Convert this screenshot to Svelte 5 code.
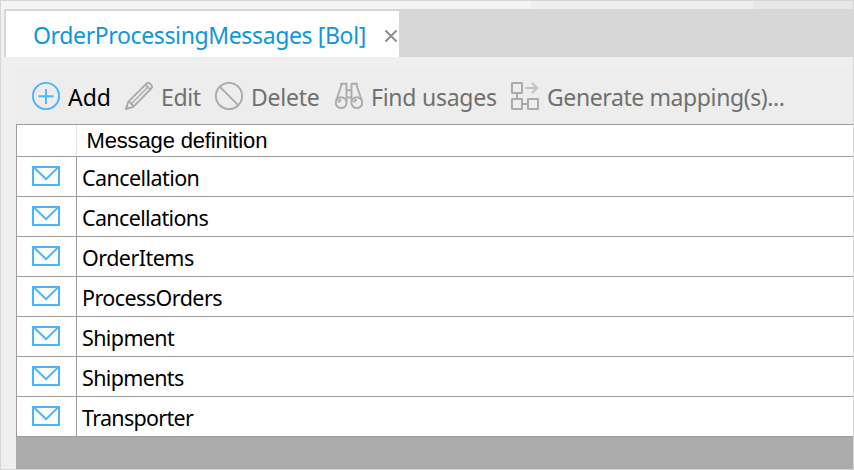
<script>
  const messages = [
    { name: 'Cancellation', spacing: -0.57 },
    { name: 'Cancellations', spacing: -0.64 },
    { name: 'OrderItems', spacing: -0.54 },
    { name: 'ProcessOrders', spacing: -0.56 },
    { name: 'Shipment', spacing: -0.62 },
    { name: 'Shipments', spacing: -0.65 },
    { name: 'Transporter', spacing: -0.7 }
  ];
</script>

<div class="window">
  <div class="strip"><i class="light"></i><i class="mid"></i><i class="dark"></i></div>
  <div class="tabs">
    <div class="edge"></div>
    <div class="tab">
      <span class="title">OrderProcessingMessages [Bol]</span>
      <svg class="close" width="14" height="14" viewBox="0 0 14 14"><path d="M1.5 1.5 12.5 12.5M12.5 1.5 1.5 12.5" /></svg>
    </div>
  </div>
  <div class="body">
    <div class="toolbar">
      <div class="action add">
        <svg width="28" height="28" viewBox="0 0 28 28"><circle cx="14" cy="14" r="13.1" /><path d="M14 7v15M6.5 14.3h15" /></svg>
        <span>Add</span>
      </div>
      <div class="action edit">
        <svg width="28" height="28" viewBox="0 0 28 28"><path d="M1 27 3.2 19.8 21.5 1.6Q23.5 0 25.7 2.2 28 4.4 26.3 6.5L8.2 24.8ZM3.2 19.8Q6.5 20.5 8.2 24.8M20.5 2.8 25.2 7.5M1 27 3.3 26.3 1.7 24.7Z" /><path class="thin" d="M22.2 5.8 5.8 22.2" /></svg>
        <span>Edit</span>
      </div>
      <div class="action delete">
        <svg width="28" height="28" viewBox="0 0 28 28"><circle cx="14" cy="14" r="13.1" /><path d="M4.7 4.7 23.3 23.3" /></svg>
        <span>Delete</span>
      </div>
      <div class="action find">
        <svg width="28" height="28" viewBox="0 0 28 28"><circle cx="6.2" cy="20.7" r="5.4" /><circle cx="21.8" cy="20.7" r="5.4" /><path d="M1.2 18.5 6.2 4V1.8H11.5V20M26.8 18.5 21.8 4V1.8H16.5V20M11.5 8.3H16.5M11.5 15.5H16.5M3.6 20.7Q3.8 18.2 6.2 18M19.2 20.7Q19.4 18.2 21.8 18" /></svg>
        <span>Find usages</span>
      </div>
      <div class="action generate">
        <svg width="28" height="28" viewBox="0 0 28 28"><path class="boxes" d="M1 1H11V11H1ZM1 17H11V27H1ZM17 17H27V27H17ZM6 11V17M11 22H17" /><path class="arrow" d="M14.3 6H26.5M21 1 26.3 6 21 11" /></svg>
        <span>Generate mapping(s)...</span>
      </div>
    </div>
    <div class="grid">
      <div class="head"><div class="iconcol"></div><div class="label">Message definition</div></div>
      {#each messages as message}
        <div class="row">
          <div class="iconcol">
            <svg width="28" height="20" viewBox="0 0 28 20"><path d="M1 1H27V19H1ZM2 1.5 14 13.2 26 1.5" /></svg>
          </div>
          <div class="name"><span style="letter-spacing: {message.spacing}px">{message.name}</span></div>
        </div>
      {/each}
    </div>
  </div>
</div>

<style>
  :global(body) { margin: 0; }
  .window {
    box-sizing: border-box; width: 854px; height: 470px; border: 1px solid #d6d6d6;
    background: #efefef; overflow: hidden; display: flex; flex-direction: column;
    font-family: "Noto Sans", "Open Sans", sans-serif; font-size: 23px; line-height: 30px; color: #000;
  }
  svg { display: block; flex: none; fill: none; }
  span { white-space: nowrap; }
  .strip { display: flex; height: 8px; flex: none; }
  .light { width: 530px; background: #f4f4f4; }
  .mid { width: 222px; background: #eee; }
  .dark { flex: 1; background: #e7e7e7; }
  .tabs { height: 48px; flex: none; display: flex; background: #d7d7d7; }
  .edge { width: 3px; background: #f2f2f2; }
  .tab {
    box-sizing: border-box; margin: 2px 0 0 2px; width: 393px; height: 46px; background: #fff;
    display: flex; align-items: center; padding-left: 27px; color: #0f97db;
  }
  .title { width: 351px; margin-top: 1px; letter-spacing: -0.37px; }
  .close { margin-top: 4px; stroke: #8b8b8b; stroke-width: 1.9; }
  .body { flex: 1; min-height: 0; padding: 12px 0 0 15px; display: flex; flex-direction: column; }
  .toolbar { height: 55px; flex: none; display: flex; background: #ededed; padding-left: 16px; }
  .action { display: flex; align-items: flex-start; padding-top: 13px; flex: none; color: #707070; }
  .action svg { stroke: #ababab; stroke-width: 1.9; stroke-linejoin: round; }
  .action .thin { stroke-width: 1.4; }
  .action span { margin-left: 8px; letter-spacing: -0.35px; }
  .add { width: 93px; color: #000; }
  .action.add svg { stroke: #4db5fc; }
  .action.add span { letter-spacing: 0; }
  .edit { width: 90px; }
  .delete { width: 120px; }
  .action.delete span, .action.find span { letter-spacing: -0.25px; }
  .find { width: 176px; }
  .action.generate span { letter-spacing: -0.4px; }
  .action .boxes { stroke-width: 2; }
  .action .arrow { stroke: #c3c3c3; stroke-width: 2; }
  .grid { flex: 1; border-top: 1px solid #9d9d9d; background: #ababab; }
  .head, .row { box-sizing: border-box; display: flex; border-left: 1px solid #9d9d9d; border-bottom: 1px solid #9d9d9d; background: #fff; }
  .head { height: 32px; }
  .row { height: 40px; font-size: 21.5px; }
  .iconcol { box-sizing: border-box; width: 60px; flex: none; border-right: 1px solid #9d9d9d; padding: 9px 0 0 15px; }
  .head .iconcol { border-right-color: #e5e5e5; }
  .iconcol svg { stroke: #4db5fc; stroke-width: 2; }
  .label { padding-left: 9.5px; font: 22px/32px "Liberation Sans", Arial, sans-serif; letter-spacing: -0.15px; }
  .name { padding: 6px 0 0 5px; }
</style>
